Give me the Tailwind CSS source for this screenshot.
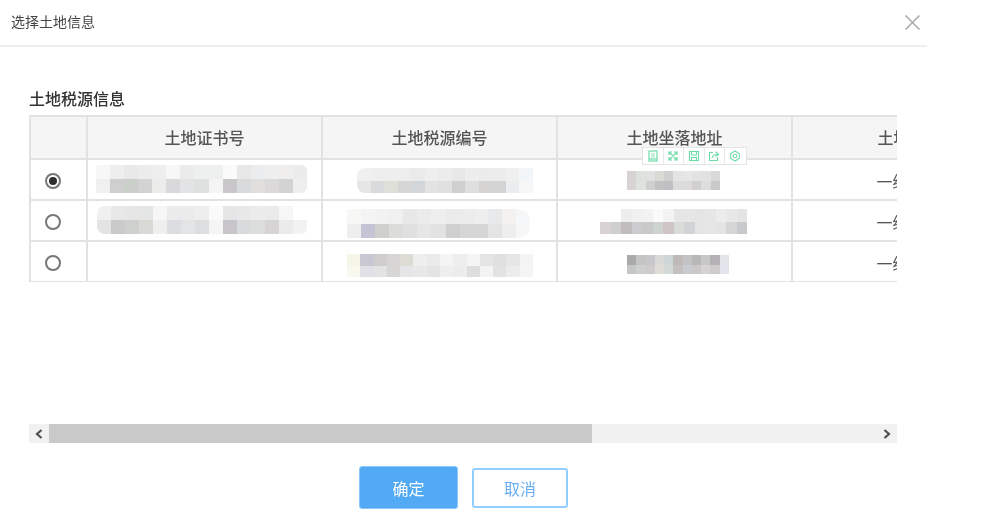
<!DOCTYPE html>
<html lang="zh-CN">
<head>
  <meta charset="UTF-8" />
  <meta name="viewport" content="width=device-width, initial-scale=1.0" />
  <title>选择土地信息</title>
  <script src="https://cdn.jsdelivr.net/npm/@tailwindcss/browser@4"></script>
</head>
<body class="bg-white overflow-hidden font-['Noto_Sans_CJK_SC','Liberation_Sans',sans-serif]">

  <div class="w-[927px] h-[532px] blur-[0.4px]">
    <!-- header -->
    <div class="h-[47px] flex items-center justify-between pl-[11px] pr-[7px] border-b-2 border-[#eeeeee]">
      <span class="text-[14px] text-[#444444] -mt-[2px]">选择土地信息</span>
      <svg class="w-[15px] h-[15px]" viewBox="0 0 15 15" fill="none" stroke="#a8a8a8" stroke-width="1.5">
        <path d="M0.5 0.5 L14.5 14.5 M14.5 0.5 L0.5 14.5" />
      </svg>
    </div>

    <div class="pl-[29px] pt-[39px]">
      <h3 class="h-[24px] mb-[5px] leading-[24px] text-[16px] font-medium text-[#333333]">土地税源信息</h3>

      <div class="relative w-[868px]">
        <div class="overflow-hidden h-[167px]">
          <table class="table-fixed border-collapse w-[997px] text-[16px] text-[#555555]">
            <colgroup>
              <col class="w-[57px]" /><col class="w-[235px]" /><col class="w-[235px]" /><col class="w-[235px]" /><col class="w-[235px]" />
            </colgroup>
            <thead>
              <tr class="h-[43px] bg-[#f5f5f5]">
                <th class="border-2 border-[#e2e2e2] font-medium"></th>
                <th class="border-2 border-[#e2e2e2] font-medium pb-[2px]">土地证书号</th>
                <th class="border-2 border-[#e2e2e2] font-medium pb-[2px]">土地税源编号</th>
                <th class="border-2 border-[#e2e2e2] font-medium pb-[2px]">土地坐落地址</th>
                <th class="border-2 border-[#e2e2e2] font-medium pb-[2px]">土地等级</th>
              </tr>
            </thead>
            <tbody>
              <tr class="h-[41px]">
                <td class="border-2 border-[#e2e2e2] p-0">
                  <div class="w-[16px] h-[16px] ml-[14px] mt-[2px] rounded-full border-2 border-[#777777] flex items-center justify-center">
                    <div class="w-[8px] h-[8px] rounded-full bg-[#2f2f2f]"></div>
                  </div>
                </td>
                <td class="border-2 border-[#e2e2e2] p-0 align-top">
                  <div class="ml-[8px] mt-[5px] w-[211px] h-[28px] rounded-r-md overflow-hidden" data-mosaic="f7f7f7,eeeeee,e9e9e9,ececec,eeeeee,f7f7f7,ebebeb,eef0f0,eeefef,fafafa,e8e8e8,ebeced,eeeeee,f0eded,ebebeb|f0f0f0,cfcfcf,cbcfca,d3d3d3,ececea,d9d9db,e2e3e5,dfe1e1,f5f5f5,c9c7c9,d8dadb,e0dfdd,dcd9da,d2d3d2,eeeeee"></div>
                </td>
                <td class="border-2 border-[#e2e2e2] p-0 align-top">
                  <div class="ml-[34px] mt-[8px] w-[176px] h-[25px] rounded-l-lg overflow-hidden" data-mosaic="f0f0f0,eeeeee,eeeeee,ededed,eaeaea,eeeeee,ececec,e8e8e8,ededed,ebebeb,ececec,f0f0f0,f3f6f8|e6e6e6,d8dadc,dfdfd9,d6d6d6,d3d6d9,e3e3e3,e0e0e0,cfcfcf,dfdfdf,d6d3d3,d4d4d4,ebeeef,f7f7f7"></div>
                </td>
                <td class="border-2 border-[#e2e2e2] p-0 align-top">
                  <div class="ml-[69px] mt-[11px] w-[93px] h-[19px] overflow-hidden" data-mosaic="d8d3d3,dde2dd,e0e1e1,d9dad5,cfcfd0,e4e4e4,e6e6e6,e3e3e3,e1e1e1,d9d9d9|d9d3d4,dfe3de,cfcfd2,c3c2c3,c0bfc2,dcdcdc,dcdadb,d2cfd1,dddddb,c9c9c9"></div>
                </td>
                <td class="border-2 border-[#e2e2e2] text-center p-0 pt-[2px] pr-[2px]">一级土地</td>
              </tr>
              <tr class="h-[41px]">
                <td class="border-2 border-[#e2e2e2] p-0">
                  <div class="w-[16px] h-[16px] ml-[14px] mt-[2px] rounded-full border-2 border-[#777777]"></div>
                </td>
                <td class="border-2 border-[#e2e2e2] p-0 align-top">
                  <div class="ml-[9px] mt-[5px] w-[210px] h-[28px] rounded-l-lg rounded-r-md overflow-hidden" data-mosaic="f0f0f0,e8e8e8,e6e6e6,e4e6e5,f6f6f6,ebebeb,ebebeb,eeeeee,fafafa,e6e6e6,e8e8e8,ebebeb,eaeaea,f6f6f6,ffffff|e4e4e4,c9cac9,cdd0cc,d9d9d6,efefed,dcdde0,e3e4e5,dcdedf,f5f5f5,c8c5ca,d8dadc,dcdedd,d6d4d5,ebebeb,f2f2f2"></div>
                </td>
                <td class="border-2 border-[#e2e2e2] p-0 align-top">
                  <div class="ml-[24px] mt-[8px] w-[183px] h-[29px] rounded-r-xl overflow-hidden" data-mosaic="f7f7f5,f4f4f4,f2f2f2,f0f0f0,e8e8e8,ebebeb,eeeeee,ebebeb,ececec,eeeeee,e8e9ea,f3f2f0,f6f7f9|eeeeee,c4c4d4,cfcfcd,dcdcda,e0e0e0,e6e6e6,e2e2e2,cfcfcf,d6d6d6,d6d6d6,e4e4e4,eeeeee,f7f7f7"></div>
                </td>
                <td class="border-2 border-[#e2e2e2] p-0 align-top">
                  <div class="ml-[42px] mt-[8px] w-[147px] h-[25px] overflow-hidden" data-mosaic="ffffff,ffffff,ededed,f0f0f0,f2f2f2,fafafa,f3f3f3,e6e6e6,e6e6e6,e4e4e4,e6e6e6,ececec,e8e8e8,e4e4e4|d8d2d4,cfcfcf,c1bcbe,cbcbd0,c8c9c8,cfd3cf,cfc4c6,d8ddd8,d1d3d6,e4e4e4,e6e6e6,e4e4e4,d6d6d6,c8c9cb"></div>
                </td>
                <td class="border-2 border-[#e2e2e2] text-center p-0 pt-[2px] pr-[2px]">一级土地</td>
              </tr>
              <tr class="h-[41px]">
                <td class="border-2 border-[#e2e2e2] p-0">
                  <div class="w-[16px] h-[16px] ml-[14px] mt-[2px] rounded-full border-2 border-[#777777]"></div>
                </td>
                <td class="border-2 border-[#e2e2e2] p-0"></td>
                <td class="border-2 border-[#e2e2e2] p-0 align-top">
                  <div class="ml-[24px] mt-[12px] w-[186px] h-[23px] overflow-hidden" data-mosaic="f6f6e8,c9c8d2,cfcdcd,d6d4d4,dcdcd4,eeeeee,eaeaea,f4f4f4,eeeeee,f5f5f5,e4e4e4,e0e0e0,e6e6e6,f4f4f4|f8f8ee,e0e0e6,e3e3e3,d8d6d4,e4e6e8,e8e8e8,e4e4e4,eeeeee,ececec,dedede,f3f3f3,e2e2e2,ececec,f5f5f5"></div>
                </td>
                <td class="border-2 border-[#e2e2e2] p-0 align-top">
                  <div class="ml-[69px] mt-[13px] w-[102px] h-[19px] overflow-hidden" data-mosaic="aaaaaa,c4c4c4,c8c8cc,d9d9d6,cfd6d6,bfb9b9,c3c2c4,b9b7b7,c9c8c8,b5b2b5,e2e4ea|c5c7c7,ced0ce,cdcbcb,dddcd7,d2d9d6,c6bfbf,c9cbd2,cbc6c8,d4d3d2,cdcbcb,e2e5ec"></div>
                </td>
                <td class="border-2 border-[#e2e2e2] text-center p-0 pt-[2px] pr-[2px]">一级土地</td>
              </tr>
            </tbody>
          </table>
        </div>

        <!-- floating screenshot toolbar -->
        <div class="absolute left-[613px] top-[32px] h-[18px] flex bg-white border border-[#e4e4e4] divide-x divide-[#e8e8e8]">
          <div class="w-[20.5px] flex items-center justify-center">
            <svg class="w-[12px] h-[12px]" viewBox="0 0 12 12" fill="none" stroke="#6fdca8" stroke-width="1.2"><rect x="2" y="1" width="8" height="10" /><rect x="4" y="3" width="4" height="5" fill="#c4f1da" stroke="none" /><path d="M2 9 H10" /></svg>
          </div>
          <div class="w-[20.5px] flex items-center justify-center">
            <svg class="w-[12px] h-[12px]" viewBox="0 0 12 12" fill="none" stroke="#6fdca8" stroke-width="1.2"><path d="M2 2 L10 10 M10 2 L2 10 M2 5 V2 H5 M7 2 H10 V5 M2 7 V10 H5 M7 10 H10 V7" /></svg>
          </div>
          <div class="w-[20.5px] flex items-center justify-center">
            <svg class="w-[12px] h-[12px]" viewBox="0 0 12 12" fill="none" stroke="#6fdca8" stroke-width="1.1"><path d="M1.5 1.5 H10.5 V10.5 H1.5 Z M3.5 1.5 V5 H8.5 V1.5 M3.5 10.5 V7.5 H8.5 V10.5" /></svg>
          </div>
          <div class="w-[20.5px] flex items-center justify-center">
            <svg class="w-[12px] h-[12px]" viewBox="0 0 12 12" fill="none" stroke="#6fdca8" stroke-width="1.1"><path d="M5 2.5 H1.5 V10.5 H9.5 V7 M4 8 C4.5 5.5 6.5 4.2 9.5 4.2 M7.5 1.8 L10.5 4.2 L7.5 6.5" /></svg>
          </div>
          <div class="w-[20.5px] flex items-center justify-center">
            <svg class="w-[12px] h-[12px]" viewBox="0 0 12 12" fill="none" stroke="#6fdca8" stroke-width="1.1"><path d="M6 1 L10.3 3.5 V8.5 L6 11 L1.7 8.5 V3.5 Z" /><circle cx="6" cy="6" r="1.8" /></svg>
          </div>
        </div>

        <!-- horizontal scrollbar -->
        <div class="mt-[142px] h-[19px] flex bg-[#f1f1f1]">
          <div class="w-[20px] flex items-center justify-center">
            <svg class="w-[8px] h-[10px]" viewBox="0 0 8 10" fill="none" stroke="#505050" stroke-width="2.2"><path d="M6.5 1 L2 5 L6.5 9" /></svg>
          </div>
          <div class="w-[543px] bg-[#c9c9c9]"></div>
          <div class="flex-1"></div>
          <div class="w-[20px] flex items-center justify-center">
            <svg class="w-[8px] h-[10px]" viewBox="0 0 8 10" fill="none" stroke="#505050" stroke-width="2.2"><path d="M1.5 1 L6 5 L1.5 9" /></svg>
          </div>
        </div>

        <!-- buttons -->
        <div class="mt-[23px] ml-[330px] flex items-start gap-[14px]">
          <button class="w-[99px] h-[43px] rounded-[3px] bg-[#52aaf5] border border-[#8cc8fb] text-[16px] text-white">确定</button>
          <button class="w-[96px] h-[40px] mt-[2px] rounded-[3px] bg-white border-2 border-[#92cdfd] text-[16px] text-[#6aaef5]">取消</button>
        </div>
      </div>
    </div>
  </div>

  <script>
    // pixelated cells: colours come from the data-mosaic attribute
    document.querySelectorAll('[data-mosaic]').forEach(function (box) {
      box.getAttribute('data-mosaic').split('|').forEach(function (row) {
        const line = document.createElement('div');
        line.className = 'flex h-1/2';
        row.split(',').forEach(function (c) {
          const cell = document.createElement('div');
          cell.className = 'flex-1';
          cell.style.backgroundColor = '#' + c;
          line.appendChild(cell);
        });
        box.appendChild(line);
      });
    });
  </script>
</body>
</html>
